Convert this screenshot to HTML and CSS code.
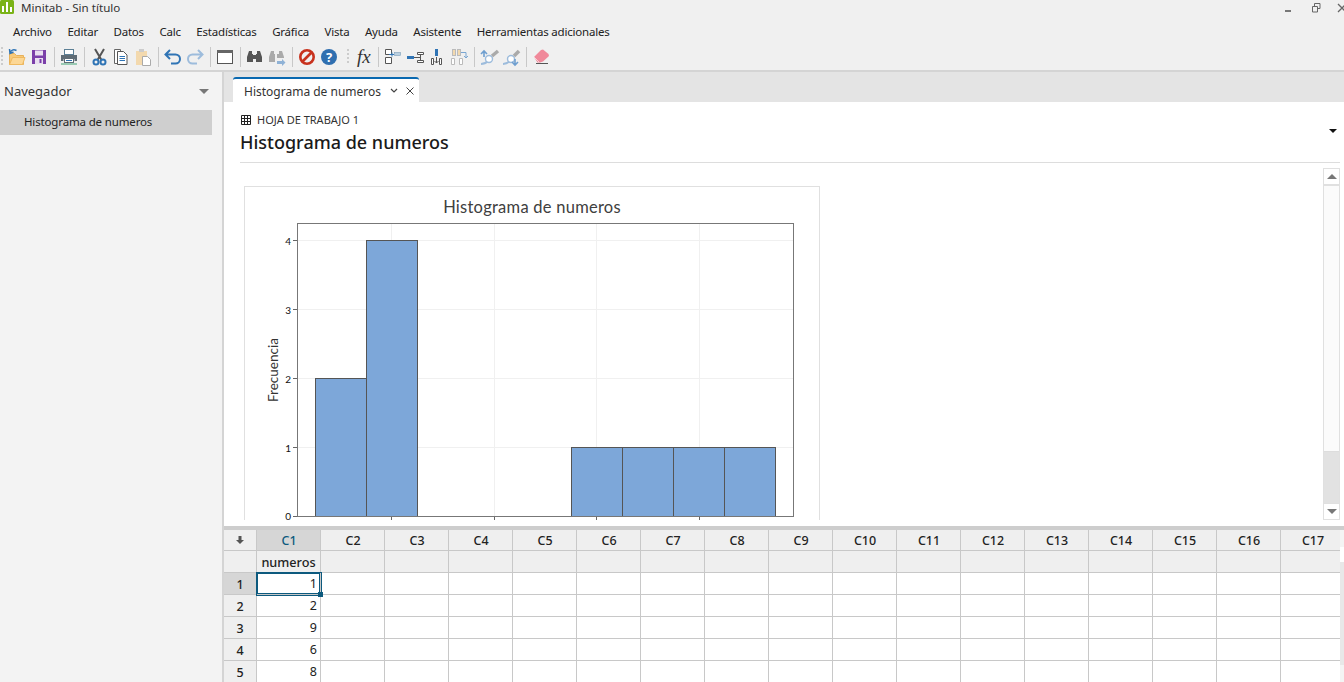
FILE: index.html
```html
<!DOCTYPE html>
<html lang="es">
<head>
<meta charset="utf-8">
<title>Minitab - Sin título</title>
<link rel="stylesheet" href="styles.css">
</head>
<body>
<div class="app">
  <header class="titlebar">
    <svg class="logo" width="14" height="14" viewBox="0 0 14 14"><rect width="14" height="14" rx="1.5" fill="#7ab317"/><path d="M2 6h2v6H2zM6 2h2v10H6zM10 7h2v5h-2z" fill="#fff"/></svg>
    <span class="apptitle">Minitab - Sin título</span>
    <div class="winctl">
      <svg width="10" height="10" viewBox="0 0 10 10"><rect x="0" y="7" width="6" height="2" fill="#777"/></svg>
      <svg width="10" height="10" viewBox="0 0 10 10"><path d="M3.500 3V.500h5.500v5h-3M1.500 3.500h5v5.500h-5z" fill="none" stroke="#666"/></svg>
      <svg width="10" height="10" viewBox="0 0 10 10"><path d="M1 1l8 8M9 1l-8 8" stroke="#666" stroke-width="1.300"/></svg>
    </div>
  </header>
  <nav class="menubar">
    <span>Archivo</span><span>Editar</span><span>Datos</span><span>Calc</span><span>Estadísticas</span><span>Gráfica</span><span>Vista</span><span>Ayuda</span><span>Asistente</span><span>Herramientas adicionales</span>
  </nav>
  <div class="toolbar">
    <svg width="620" height="26" viewBox="0 0 620 26">
      <g fill="#ccc"><rect x="1" y="3" width="2" height="2"/><rect x="1" y="7" width="2" height="2"/><rect x="1" y="11" width="2" height="2"/><rect x="1" y="15" width="2" height="2"/><rect x="1" y="19" width="2" height="2"/></g>
      <!-- open -->
      <path d="M9.500 20.500V9.500h5l2 2h7v9z" fill="#f8c978" stroke="#e7b15a"/><path d="M9.500 20.500l3-7h12.500l-2.500 7z" fill="#fcd795" stroke="#efb95f"/><path d="M10 9.500c.5-3.500 3.500-4.500 6.500-3M9.500 5l.5 4.500 3.500-1.500" fill="none" stroke="#2f74b5" stroke-width="1.500"/>
      <!-- save -->
      <path d="M32 6h14v14H32z" fill="#7b3fa9"/><rect x="35" y="6.500" width="8" height="5" fill="#e9dff0"/><rect x="35" y="14" width="8" height="6" fill="#e9dff0"/><rect x="39.500" y="15" width="2" height="4" fill="#7b3fa9"/>
      <rect x="54" y="3" width="1" height="20" fill="#c8c8c8"/>
      <!-- print -->
      <rect x="64.500" y="5.500" width="9" height="5" fill="#fff" stroke="#5b7f95"/><path d="M61 11h16v6h-2.500v-2h-11v2H61z" fill="#5f6c75"/><rect x="64.500" y="14.500" width="9" height="4" fill="#fff" stroke="#5f6c75"/><rect x="66" y="16" width="6" height="1" fill="#2f74b5"/><rect x="61" y="19.500" width="16" height="1" fill="#43a275"/>
      <rect x="84" y="3" width="1" height="20" fill="#c8c8c8"/>
      <!-- cut -->
      <path d="M95 5l6.500 11M104 5l-6.500 11" stroke="#555" stroke-width="2" fill="none"/><circle cx="96" cy="18" r="2.500" fill="none" stroke="#2f74b5" stroke-width="2"/><circle cx="103" cy="18" r="2.500" fill="none" stroke="#2f74b5" stroke-width="2"/>
      <!-- copy -->
      <path d="M114.500 5.500h6v14h-6z" fill="#fff" stroke="#666"/><path d="M117.500 7.500h6l3.500 3.500v9.500h-9.500z" fill="#fff" stroke="#555"/><path d="M119.500 12.500h5.500M119.500 14.500h5.500M119.500 16.500h5.500" stroke="#2f74b5"/>
      <!-- paste -->
      <rect x="136" y="7" width="11" height="14" fill="#f3d9ae"/><rect x="139" y="5" width="5" height="3" fill="#ccc"/><path d="M142.500 12.500h5l3 3v6h-8z" fill="#fff" stroke="#aaa"/>
      <rect x="158" y="3" width="1" height="20" fill="#c8c8c8"/>
      <!-- undo/redo -->
      <path d="M170 6l-4.500 4.500 4.500 4.500M166 10.500h9.500a4.500 4.500 0 0 1 0 9H171" fill="none" stroke="#2f74b5" stroke-width="2"/>
      <path d="M198 6l4.500 4.500-4.500 4.500M202 10.500h-9.500a4.500 4.500 0 0 0 0 9H197" fill="none" stroke="#9dbcdc" stroke-width="2"/>
      <rect x="210" y="3" width="1" height="20" fill="#c8c8c8"/>
      <!-- window -->
      <rect x="217.500" y="6.500" width="15" height="13" fill="#fff" stroke="#555"/><rect x="217" y="6" width="16" height="3" fill="#666"/>
      <rect x="240" y="3" width="1" height="20" fill="#c8c8c8"/>
      <!-- binoculars -->
      <path d="M249 7h3v3h1v8h-6v-5zM257 7h3l2 6v5h-6v-8h1zM253 11h3v4h-3z" fill="#555"/>
      <path d="M271 7h3v3h1v8h-6v-5zM279 7h3l2 6v1h-7v-4h2z" fill="#aaa"/><path d="M277 17h5v-2l3.500 3.500-3.500 3.500v-2h-5z" fill="#8fb2d6"/>
      <rect x="292" y="3" width="1" height="20" fill="#c8c8c8"/>
      <!-- stop / help -->
      <circle cx="307" cy="13" r="6.700" fill="none" stroke="#c8321e" stroke-width="2.600"/><path d="M302 18l10-10" stroke="#c8321e" stroke-width="2.600"/>
      <circle cx="329" cy="13" r="8" fill="#2f6fb0"/><text x="329" y="17.500" class="helpmark">?</text>
      <g fill="#ccc"><rect x="347" y="5" width="2" height="2"/><rect x="347" y="9" width="2" height="2"/><rect x="347" y="13" width="2" height="2"/><rect x="347" y="17" width="2" height="2"/></g>
      <text x="357" y="19" class="fxmark">fx</text>
      <rect x="378" y="3" width="1" height="20" fill="#c8c8c8"/>
      <!-- column tools -->
      <path d="M385.500 5.500h6v5h-6zM385.500 13.500h6v6h-6z" fill="#fff" stroke="#555"/><rect x="394.500" y="8.500" width="6" height="3" fill="#b9cfe0" stroke="#7d9db8" stroke-width=".6"/><path d="M389 10.500h5" stroke="#2f74b5"/><path d="M392 8.500v4" stroke="#2f74b5"/>
      <rect x="407" y="12" width="7" height="3" fill="#2f74b5"/><path d="M417.500 8.500h6v2h-6zM417.500 16.500h6v2h-6z" fill="#fff" stroke="#555"/><path d="M414 13.500h6M420.500 10.500v6" stroke="#555"/>
      <rect x="435" y="5" width="3" height="7" fill="#2f74b5"/><path d="M431.500 14.500h2v6h-2zM439.500 14.500h2v6h-2z" fill="#fff" stroke="#555"/><path d="M436.500 13v6M434.500 17l2 2 2-2" fill="none" stroke="#555"/>
      <rect x="452.500" y="5.500" width="3" height="6" fill="#f3d9ae" stroke="#bbb"/><rect x="457.500" y="5.500" width="3" height="6" fill="#f3d9ae" stroke="#bbb"/><path d="M451.500 14.500h3v6h-3zM459.500 14.500h3v6h-3z" fill="#fff" stroke="#bbb"/><path d="M461 8.500h5v5M464 12l2 2 2-2" fill="none" stroke="#7aa6d2"/>
      <rect x="474" y="3" width="1" height="20" fill="#c8c8c8"/>
      <!-- brush tools -->
      <path d="M481 20c3 0 5-1 7-3" stroke="#9dbcdc" stroke-width="2" fill="none"/><circle cx="489" cy="15" r="3.500" fill="#fff" stroke="#9dbcdc" stroke-width="1.400"/><path d="M492 12l6-5" stroke="#aaa" stroke-width="3.500"/><path d="M481 10l3-3 3 3M484 8v5" fill="none" stroke="#6f9fd0" stroke-width="1.600"/>
      <path d="M503 20c3 0 5-1 7-3" stroke="#9dbcdc" stroke-width="2" fill="none"/><circle cx="511" cy="15" r="3.500" fill="#fff" stroke="#9dbcdc" stroke-width="1.400"/><path d="M514 12l5-5" stroke="#aaa" stroke-width="3.500"/><path d="M512 18l3 3 3-3M515 20v-5" fill="none" stroke="#6f9fd0" stroke-width="1.600"/>
      <rect x="526" y="3" width="1" height="20" fill="#c8c8c8"/>
      <!-- eraser -->
      <path d="M534 13l7-7 2-.5 5.500 4.500.5 2-6 5.500-3 1h-2.500z" fill="#f0899a"/><path d="M534 13l5 5" stroke="#fbd0d6"/><path d="M536 19.500h12" stroke="#555"/>
    </svg>
  </div>
  <div class="workspace">
    <aside class="navigator">
      <div class="navhead"><span>Navegador</span><i class="navcaret"></i></div>
      <div class="navitem">Histograma de numeros</div>
    </aside>
    <main class="main">
      <div class="tabstrip">
        <div class="tab">
          <span>Histograma de numeros</span>
          <svg width="8" height="6" viewBox="0 0 8 6"><path d="M1 1l3 3 3-3" fill="none" stroke="#444" stroke-width="1.200"/></svg>
          <svg width="8" height="8" viewBox="0 0 8 8"><path d="M.5.500l7 7M7.500.500l-7 7" stroke="#444"/></svg>
        </div>
      </div>
      <section class="report">
        <div class="reporthead">
          <div class="sheet">
            <svg width="10" height="10" viewBox="0 0 10 10"><path d="M.5.500h9v9h-9zM.5 3.500h9M.5 6.500h9M3.500.500v9M6.500.500v9" fill="none" stroke="#222"/></svg>
            <span>HOJA DE TRABAJO 1</span>
          </div>
          <div class="heading-row"><h1>Histograma de numeros</h1><i class="headcaret"></i></div>
        </div>
        <div class="output">
          <div class="card">
            <svg class="chart" width="576" height="334" viewBox="244 186 576 334">
              <text x="532" y="213" class="charttitle">Histograma de numeros</text>
              <g class="grid">
                <path d="M298 240.500h495M298 309.500h495M298 378.500h495M298 447.500h495M391.500 224v292M494.500 224v292M596.500 224v292M699.500 224v292"/>
              </g>
              <g class="bars">
                <rect x="315.500" y="378.500" width="51" height="138"/>
                <rect x="366.500" y="240.500" width="51" height="276"/>
                <rect x="571.500" y="447.500" width="51" height="69"/>
                <rect x="622.500" y="447.500" width="51" height="69"/>
                <rect x="673.500" y="447.500" width="51" height="69"/>
                <rect x="724.500" y="447.500" width="51" height="69"/>
              </g>
              <rect class="plot" x="297.500" y="223.500" width="496" height="293"/>
              <path class="ticks" d="M293 240.500h4M293 309.500h4M293 378.500h4M293 447.500h4M293 516.500h4M391.500 517v3M494.500 517v3M596.500 517v3M699.500 517v3"/>
              <g class="ylabels">
                <text x="291" y="244.500">4</text>
                <text x="291" y="313.500">3</text>
                <text x="291" y="382.500">2</text>
                <text x="291" y="451.500">1</text>
                <text x="291" y="520">0</text>
              </g>
              <text class="yaxis" transform="translate(278 402) rotate(-90)">Frecuencia</text>
            </svg>
          </div>
          <div class="scrollbar">
            <div class="sbtn"><i class="up"></i></div>
            <div class="strack"></div>
            <div class="sthumb"></div>
            <div class="sbtn"><i class="down"></i></div>
          </div>
        </div>
      </section>
      <div class="sheetgrid">
        <table class="cells">
          <colgroup><col class="c0"><col class="c1"><col class="cn" span="16"></colgroup>
          <tr class="hrow"><th class="corner"><svg width="8" height="10" viewBox="0 0 8 10"><path d="M2.500 1h3v4H8L4 9 0 5h2.500z" fill="#555"/></svg></th><th class="active">C1</th><th>C2</th><th>C3</th><th>C4</th><th>C5</th><th>C6</th><th>C7</th><th>C8</th><th>C9</th><th>C10</th><th>C11</th><th>C12</th><th>C13</th><th>C14</th><th>C15</th><th>C16</th><th>C17</th></tr>
          <tr class="nrow"><th></th><th class="colname">numeros</th><th></th><th></th><th></th><th></th><th></th><th></th><th></th><th></th><th></th><th></th><th></th><th></th><th></th><th></th><th></th><th></th></tr>
          <tr><th class="active">1</th><td class="sel">1<i class="handle"></i></td><td></td><td></td><td></td><td></td><td></td><td></td><td></td><td></td><td></td><td></td><td></td><td></td><td></td><td></td><td></td><td></td></tr>
          <tr><th>2</th><td>2</td><td></td><td></td><td></td><td></td><td></td><td></td><td></td><td></td><td></td><td></td><td></td><td></td><td></td><td></td><td></td><td></td></tr>
          <tr><th>3</th><td>9</td><td></td><td></td><td></td><td></td><td></td><td></td><td></td><td></td><td></td><td></td><td></td><td></td><td></td><td></td><td></td><td></td></tr>
          <tr><th>4</th><td>6</td><td></td><td></td><td></td><td></td><td></td><td></td><td></td><td></td><td></td><td></td><td></td><td></td><td></td><td></td><td></td><td></td></tr>
          <tr><th>5</th><td>8</td><td></td><td></td><td></td><td></td><td></td><td></td><td></td><td></td><td></td><td></td><td></td><td></td><td></td><td></td><td></td><td></td></tr>
        </table>
        <div class="gridscroll"><i class="gsmark"></i><i class="gsthumb"></i><i class="gsfill"></i><i class="gsmark"></i></div>
      </div>
    </main>
  </div>
</div>
</body>
</html>
```
FILE: styles.css
```css
* { box-sizing: border-box; }
html, body { margin: 0; height: 100%; overflow: hidden; }
body { font-family: "Noto Sans", "Open Sans", sans-serif; font-size: 12px; color: #222; background: #f0f0f0; }
.app { width: 1344px; height: 682px; display: flex; flex-direction: column; overflow: hidden; }
.titlebar { height: 16px; display: flex; align-items: center; background: #f0f0f0; }
.logo { margin-top: -3px; }
.apptitle { margin-left: 7px; color: #333; line-height: 16px; font-size: 11.600px; }
.winctl { margin-left: auto; display: flex; gap: 16px; margin-right: -3px; }
.menubar { height: 28px; display: flex; align-items: center; padding: 2px 0 0 13px; gap: 15.500px; color: #222; font-size: 11.500px; letter-spacing: -.2px; }
.toolbar { height: 26px; overflow: hidden; }
.helpmark { font: bold 13px "Noto Sans", sans-serif; fill: #fff; text-anchor: middle; }
.fxmark { font: italic 19px "Liberation Serif", serif; fill: #333; }
.workspace { flex: 1; min-height: 0; display: flex; border-top: 2px solid #d4d4d4; }
.navigator { width: 224px; flex: none; background: #f3f3f3; border-right: 2px solid #d4d4d4; }
.navhead { height: 38px; display: flex; align-items: center; justify-content: space-between; padding: 0 13px 0 4px; font-size: 13px; color: #333; }
.navcaret { border: 5px solid transparent; border-top: 5px solid #777; border-bottom: 0; }
.navitem { width: 212px; height: 25px; background: #cfcfcf; padding-left: 24px; line-height: 24px; color: #222; font-size: 11.500px; letter-spacing: -.15px; }
.main { flex: 1; min-width: 0; display: flex; flex-direction: column; background: #fff; }
.tabstrip { height: 30px; flex: none; background: #e4e4e4; padding: 5px 0 0 9px; }
.tab { width: 186px; height: 25px; background: #fff; border-top: 2px solid #0a69b0; border-radius: 3px 3px 0 0; display: flex; align-items: center; padding: 1px 0 0 11px; color: #333; }
.tab span { margin-right: 9px; }
.tab svg + svg { margin-left: 8px; }
.report { height: 424px; flex: none; padding-left: 16px; display: flex; flex-direction: column; }
.reporthead { height: 61px; margin-right: 4px; border-bottom: 1px solid #ddd; padding-top: 10px; flex: none; }
.sheet { display: flex; align-items: center; gap: 6px; padding-left: 1px; font-size: 11px; line-height: 15px; color: #333; }
.heading-row { display: flex; align-items: center; justify-content: space-between; margin-top: 3px; }
h1 { margin: 0; font-size: 18px; font-weight: 500; line-height: 25px; color: #1a1a1a; }
.headcaret { border: 4px solid transparent; border-top: 4px solid #111; border-bottom: 0; margin: -24px 3px 0 0; }
.output { flex: 1; min-height: 0; display: flex; justify-content: space-between; overflow: hidden; padding: 5px 4px 0 4px; }
.card { width: 576px; height: 334px; margin-top: 18px; border: 1px solid #e0e0e0; border-bottom: 0; flex: none; }
.chart { display: block; margin: -1px; overflow: visible; }
.charttitle { font: 400 16.500px "Lato", sans-serif; fill: #404040; text-anchor: middle; letter-spacing: .25px; }
.grid path { stroke: #f0f0f0; fill: none; }
.bars rect { fill: #7da7d9; stroke: #555; }
.plot { fill: none; stroke: #777; }
.ticks { stroke: #666; fill: none; }
.ylabels text { font: 10px "Lato", sans-serif; fill: #111; text-anchor: end; }
.yaxis { font: 13.500px "Lato", sans-serif; fill: #333; }
.scrollbar { width: 17px; height: 352px; flex: none; border: 1px solid #e0e0e0; background: #fbfbfb; display: flex; flex-direction: column; }
.sbtn { height: 16px; flex: none; background: #fff; display: flex; align-items: center; justify-content: center; }
.sbtn:first-child { border-bottom: 2px solid #e0e0e0; height: 17px; }
.sbtn:last-child { border-top: 1px solid #e0e0e0; }
.strack { flex: 1; }
.sthumb { height: 52px; background: #e2e2e2; border-top: 1px solid #ddd; }
.up { border: 5px solid transparent; border-bottom: 5px solid #777; border-top: 0; }
.down { border: 5px solid transparent; border-top: 5px solid #777; border-bottom: 0; }
.sheetgrid { flex: 1; min-height: 0; border-top: 4px solid #cdcdcd; position: relative; overflow: hidden; }
.cells { border-collapse: separate; border-spacing: 0; table-layout: fixed; width: 1120px; color: #222; }
.c0 { width: 33px; }
.c1, .cn { width: 64px; }
.cells th, .cells td { padding: 0; border-right: 1px solid #c8c8c8; border-bottom: 1px solid #c8c8c8; height: 22px; font-weight: 400; }
.cells th { background: #efefef; text-align: center; font-size: 12.500px; }
.hrow th { height: 21px; font-weight: 500; color: #222; padding-left: 1px; }
.hrow th.corner { padding-left: 0; }
.nrow th { height: 22px; }
.cells .colname { font-weight: 500; font-size: 12.700px; }
.cells th.active { background: #d6d6d6; }
.hrow th.active { color: #0d5a7e; }
.cells td { text-align: right; padding-right: 3px; background: #fff; position: relative; line-height: 16px; font-size: 12.500px; }
.cells tr > th:first-child { font-weight: 500; padding-top: 1px; }
.cells td.sel { box-shadow: inset 0 0 0 1px #0d5a7e, 0 0 0 1px #0d5a7e; z-index: 1; }
.handle { position: absolute; right: -3px; bottom: -3px; width: 5px; height: 5px; background: #0d5a7e; }
.gridscroll { position: absolute; right: 0; top: 0; bottom: 0; width: 4px; background: #e8e8e8; display: flex; flex-direction: column; }
.gsmark { height: 17px; flex: none; background: #f4f4f4; }
.gsthumb { height: 15px; flex: none; background: #fff; }
.gsfill { flex: 1; }
```
